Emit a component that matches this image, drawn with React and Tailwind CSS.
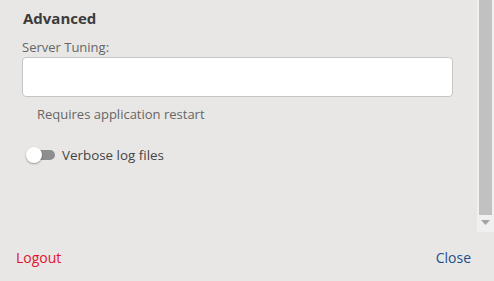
export default function App() {
  const font = { fontFamily: '"Open Sans", "Noto Sans", sans-serif' }
  return (
    <div className="w-[494px] h-[281px] bg-[#e8e7e5] flex flex-col overflow-hidden font-['Open_Sans',sans-serif]">
      <div className="h-[232px] flex">
        <div className="flex-1 pl-[22px] pr-[24px]">
          <h2 className="mt-[8px] text-[15px] font-bold text-[#3b3b3b] leading-[20px] pl-[1px]">Advanced</h2>
          <label className="block mt-[10px] text-[13px] text-[#666] leading-[18px]">Server Tuning:</label>
          <input
            type="text"
            className="block mt-[1px] w-full h-[40px] bg-white border border-[#c6c6c6] rounded-[4px] outline-none px-2"
          />
          <p className="mt-[8px] ml-[15px] text-[13px] text-[#666] leading-[18px]">Requires application restart</p>
          <div className="mt-[23px] flex items-center gap-[7px] ml-[4px]">
            <span className="relative w-[29px] h-[16px] flex items-center">
              <span className="absolute left-[9px] right-0 h-[10px] rounded-full bg-[#8e8e8e]" />
              <span className="absolute left-0 w-[16px] h-[16px] rounded-full bg-white shadow-[0_1px_2px_rgba(0,0,0,0.35)]" />
            </span>
            <span className="text-[13.4px] text-[#444] leading-[18px]">Verbose log files</span>
          </div>
        </div>
        <div className="w-[17px] bg-[#f0f0f0] flex flex-col items-center">
          <div className="w-[13px] h-[215px] bg-[#c1c1c1]" />
          <svg className="mt-[5px]" width="9" height="6" viewBox="0 0 9 6">
            <path d="M0 0 H9 L4.5 5 Z" fill="#a3a3a3" />
          </svg>
        </div>
      </div>
      <div className="flex-1 flex items-center justify-between px-[16px] pt-[2px]">
        <button className="text-[14px] text-[#e2122d]" style={font}>Logout</button>
        <button className="text-[14px] text-[#1e4e8a] mr-[7px]" style={font}>Close</button>
      </div>
    </div>
  )
}
